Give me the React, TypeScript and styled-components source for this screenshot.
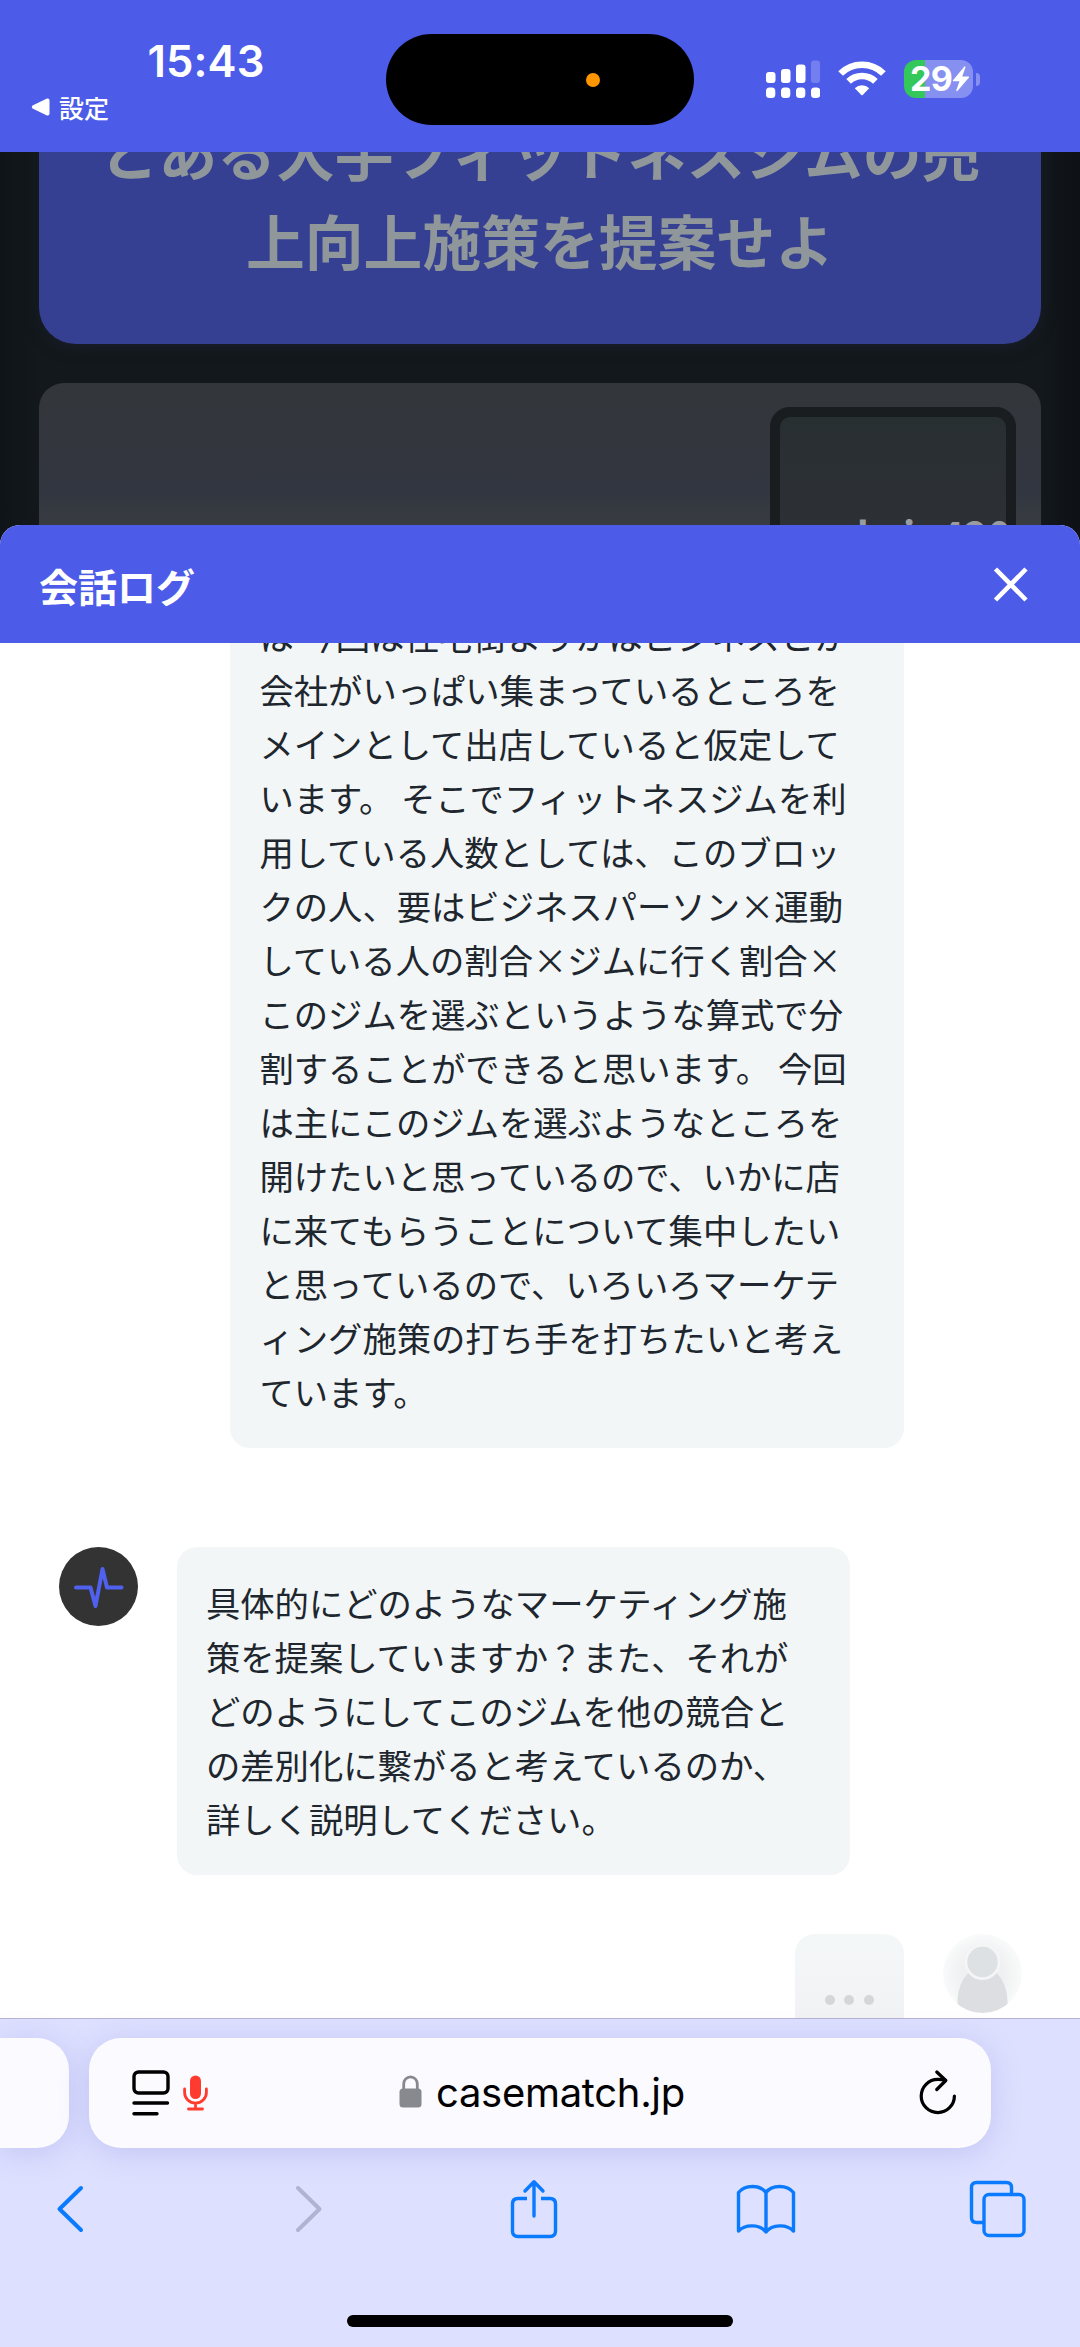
import React from "react";
import styled, { createGlobalStyle } from "styled-components";

const JP = `"Noto Sans CJK JP", sans-serif`;
const UI = `Inter, "Noto Sans CJK JP", sans-serif`;
const brand = "#4c5ce9";
const iosBlue = "#0a7aff";

const Global = createGlobalStyle`
  * { box-sizing: border-box; }
  body { margin: 0; background: #fff; }
  svg { display: block; flex: none; }
`;

const Screen = styled.main`
  width: 1080px;
  height: 2347px;
  display: flex;
  flex-direction: column;
  overflow: hidden;
  font-family: ${JP};
`;

/* ---------- status bar ---------- */

const StatusBar = styled.header`
  height: 152px;
  flex: none;
  display: grid;
  grid-template-columns: 386px 308px 1fr;
  background: ${brand};
  color: #fff;
`;

const StatusLeft = styled.div`
  display: flex;
  flex-direction: column;
  padding: 35px 0 0 30.5px;
`;

const Clock = styled.div`
  margin-left: 117px;
  font: 600 43.6px/54px ${UI};
  letter-spacing: 0.1px;
  white-space: nowrap;
`;

const BackLink = styled.div`
  display: flex;
  align-items: center;
  gap: 9.5px;
  height: 36px;
  font: 500 25px/36px ${JP};
`;

const Island = styled.div`
  height: 91px;
  margin-top: 34px;
  border-radius: 46px;
  background: #000;
  display: flex;
  align-items: center;
  padding-left: 200px;
`;

const MicDot = styled.span`
  width: 14px;
  height: 14px;
  border-radius: 50%;
  background: #ff9500;
`;

const StatusIcons = styled.div`
  display: flex;
  align-items: center;
  height: 38px;
  margin: 60px 0 0 72px;
`;

const Battery = styled.div`
  width: 69px;
  height: 38px;
  margin-left: 18px;
  border-radius: 12px;
  display: flex;
  align-items: center;
  padding-left: 6px;
  background: linear-gradient(90deg, #34c759 0 21px, #8690f1 21px);
  font: 700 34px/38px ${UI};
  letter-spacing: -0.6px;
`;

const BatteryCap = styled.span`
  width: 4px;
  height: 13px;
  margin-left: 3px;
  border-radius: 0 4px 4px 0;
  background: #8690f1;
`;

/* ---------- dimmed page ---------- */

const Page = styled.section`
  height: 398px;
  flex: none;
  overflow: hidden;
  padding: 0 39px;
  background: linear-gradient(90deg, #0f1418 0, #12181b 40px, #12181b 1040px, #0e1116 100%);
`;

const TopicCard = styled.h1`
  margin: -104px 0 0;
  padding: 59px 0 59.5px;
  border-radius: 37px;
  background: #364093;
  box-shadow: 0 4px 14px #181d29;
  color: #8f979b;
  text-align: center;
  font: 700 58.8px/88.5px ${JP};
  white-space: nowrap;
`;

const VideoCard = styled.div`
  height: 300px;
  margin-top: 39px;
  padding: 24px 25px;
  border-radius: 25px;
  display: flex;
  justify-content: flex-end;
  background: linear-gradient(#33363a 0, #323640 110px, #393d41 145px);
`;

const Thumb = styled.div`
  width: 246px;
  height: 220px;
  border: 10px solid #191d20;
  border-radius: 20px;
  background: linear-gradient(#282f31, #2d3035 110px);
  display: flex;
  justify-content: center;
  padding-top: 87px;
  color: #9a9ca0;
  font: 700 40px/60px ${JP};
`;

/* ---------- conversation sheet ---------- */

const Sheet = styled.section`
  position: relative;
  flex: none;
  height: 1493px;
  margin-top: -25px;
  overflow: hidden;
  border-radius: 20px 20px 0 0;
  background: #fff;
`;

const SheetHeader = styled.div`
  height: 118px;
  display: flex;
  align-items: center;
  justify-content: space-between;
  padding: 0 51px 0 39px;
  background: ${brand};
  color: #fff;
`;

const SheetTitle = styled.h2`
  margin: 1px 0 0;
  font: 700 39px/58px ${JP};
`;

const Log = styled.div`
  height: 1375px;
  overflow: hidden;
  display: flex;
  flex-direction: column;
`;

const Row = styled.div<{ $mine?: boolean; $gap: number }>`
  display: flex;
  align-items: flex-start;
  flex: none;
  gap: 39px;
  margin-top: ${(p) => p.$gap}px;
  padding: 0 58.5px;
  justify-content: ${(p) => (p.$mine ? "flex-end" : "flex-start")};
`;

const Bubble = styled.div`
  width: 673.5px;
  padding: 29.4px;
  border-radius: 20px;
  background: #f3f6f7;
  color: #20262e;
  font: 400 34.35px/53.97px ${JP};
  white-space: nowrap;
`;

const Line = styled.div``;

const AvatarSlot = styled.div`
  width: 79px;
  flex: none;
`;

const BotAvatar = styled.div`
  width: 79px;
  height: 79px;
  border-radius: 50%;
  background: #333;
`;

const Typing = styled.div`
  width: 109px;
  height: 132px;
  border-radius: 20px;
  background: linear-gradient(#f4f7f8, #f1f2f3 84px);
  display: flex;
  align-items: center;
  justify-content: center;
  gap: 9.5px;
`;

const Dot = styled.i`
  width: 10px;
  height: 10px;
  border-radius: 50%;
  background: #d5d6d6;
`;

/* ---------- browser chrome ---------- */

const Browser = styled.footer`
  position: relative;
  height: 329px;
  flex: none;
  border-top: 1px solid #b7b3d8;
  background: #dde0fe;
  display: flex;
  flex-direction: column;
  align-items: center;
`;

const Tabs = styled.div`
  width: 1080px;
  height: 110px;
  margin-top: 19px;
  display: flex;
  gap: 20px;
`;

const TabEdge = styled.div`
  width: 68.5px;
  border-radius: 0 32px 32px 0;
  background: #fafaff;
  box-shadow: 0 5px 30px rgba(120, 115, 220, 0.25);
`;

const AddressBar = styled.div`
  width: 902.5px;
  border-radius: 32px;
  background: #fafaff;
  box-shadow: 0 5px 30px rgba(120, 115, 220, 0.25);
  display: grid;
  grid-template-columns: 310px 1fr 72px;
  align-items: center;
`;

const PageTools = styled.div`
  display: flex;
  align-items: center;
  gap: 13px;
  padding-left: 43px;
`;

const Host = styled.div`
  display: flex;
  align-items: center;
  gap: 14.5px;
  color: #000;
  font: 400 40px/50px ${UI};
  letter-spacing: -0.3px;
`;

const Nav = styled.nav`
  width: 1080px;
  height: 60px;
  margin-top: 31px;
  padding: 0 54px 0 42px;
  display: flex;
  justify-content: space-between;
  align-items: center;
`;

const NavItem = styled.div<{ $inset?: number }>`
  width: 58px;
  padding-left: ${(p) => p.$inset ?? 0}px;
  display: flex;
  justify-content: center;
`;

const HomeIndicator = styled.div`
  width: 386px;
  height: 12.5px;
  margin-top: 75.5px;
  border-radius: 7px;
  background: #000;
`;

/* ---------- icons ---------- */

const Signal = () => (
  <svg width="54" height="38" fill="#fff">
    <rect x="0" y="12" width="9.5" height="11" rx="3" />
    <rect x="15" y="9" width="9.5" height="14" rx="3" />
    <rect x="30" y="4.5" width="9.5" height="18.5" rx="3" />
    <rect x="45" y="0.5" width="9" height="22.5" rx="3" opacity="0.22" />
    {[0, 15, 30, 45].map((x) => (
      <rect key={x} x={x} y="27.5" width="9.3" height="10.5" rx="3.5" />
    ))}
  </svg>
);

const WifiSlot = styled.span`
  margin-left: 18px;
`;

const Wifi = () => (
  <WifiSlot>
    <svg width="48" height="38" viewBox="0 0 48 38" fill="none" stroke="#fff" strokeWidth="6.6">
      <path d="M2.6 13.5 A30.5 30.5 0 0 1 45.4 13.5" />
      <path d="M10.6 21.4 A19.2 19.2 0 0 1 37.4 21.4" />
      <path d="M16.8 28.2 A10.3 10.3 0 0 1 31.2 28.2 L24.7 35 Q24 35.7 23.3 35 Z" fill="#fff" stroke="none" />
    </svg>
  </WifiSlot>
);

const Bolt = () => (
  <svg width="18" height="26" viewBox="0 0 18 26" fill="#fff">
    <path d="M12.4 0.5 L1 14.2 Q0.3 15.3 1.6 15.3 H7.5 L4.2 24.6 Q4.4 25.8 5.4 25 L17 11.6 Q17.5 10.4 16.3 10.4 H10.2 L13.4 1.4 Q13.5 0 12.4 0.5 Z" />
  </svg>
);

const Pulse = () => (
  <svg width="79" height="79" fill="none" stroke="#4f61ee" strokeWidth="4" strokeLinecap="round" strokeLinejoin="round">
    <path d="M17 40.5 H31.5 L36.5 59 L43.5 22 L48 40.5 H62.5" />
  </svg>
);

const Person = () => (
  <svg width="79" height="79" viewBox="0 0 79 79">
    <defs>
      <radialGradient id="disc">
        <stop offset="0.5" stopColor="#eef0f1" />
        <stop offset="1" stopColor="#f9fafa" />
      </radialGradient>
      <clipPath id="round">
        <circle cx="39.5" cy="39.5" r="39.5" />
      </clipPath>
    </defs>
    <g clipPath="url(#round)">
      <rect width="79" height="79" fill="url(#disc)" />
      <path d="M14.5 66 Q15 50 25.5 38.5 H53.5 Q64 50 64.5 66 V79 H14.5 Z" fill="#dcdee2" />
      <circle cx="39.5" cy="28" r="18" fill="#f3f5f6" />
      <circle cx="39.5" cy="28" r="15.2" fill="#dde1e3" />
    </g>
  </svg>
);

const Close = () => (
  <svg width="36" height="36" stroke="#fff" strokeWidth="4.6">
    <path d="M2.5 3 L33 34 M33 3 L2.5 34" />
  </svg>
);

const Reader = () => (
  <svg width="38" height="46" fill="none" stroke="#000" strokeWidth="3.4" strokeLinecap="round">
    <rect x="2" y="2" width="34" height="21" rx="4.5" />
    <path d="M2 33 H35.5 M2 43.7 H25" />
  </svg>
);

const Microphone = () => (
  <svg width="25" height="36" fill="none" stroke="#ff3b30" strokeWidth="2.8" strokeLinecap="round">
    <rect x="7" y="0.5" width="11" height="23.5" rx="5.5" fill="#ff3b30" stroke="none" />
    <path d="M1.6 14 V17.5 A10.9 10.6 0 0 0 23.4 17.5 V14 M12.5 28.5 V34 M5.5 34 H19.5" />
  </svg>
);

const Lock = () => (
  <svg width="23" height="36" viewBox="0 0 23 36">
    <path d="M4.7 15 V9 A6.8 7.2 0 0 1 18.3 9 V15" fill="none" stroke="#88898f" strokeWidth="2.8" />
    <rect x="0.5" y="13.5" width="22" height="19" rx="3.5" fill="#88898f" />
  </svg>
);

const Reload = () => (
  <svg width="38" height="46" fill="none" stroke="#000" strokeWidth="3.2" strokeLinecap="round" strokeLinejoin="round">
    <path d="M35.4 26 A16.6 16.6 0 1 1 18.8 9.4 Q23 9.4 26.5 10.5" />
    <path d="M17.8 2 L26.8 10.5 L17.8 19.5" />
  </svg>
);

const Chevron = ({ flip }: { flip?: boolean }) => (
  <svg width="34" height="50" fill="none" stroke={flip ? "#b0b3d2" : iosBlue} strokeWidth="4" strokeLinecap="round" strokeLinejoin="round">
    <path d={flip ? "M5 4 L26.5 25 L5 46" : "M27 4 L5.5 25 L27 46"} />
  </svg>
);

const Share = () => (
  <svg width="48" height="60" fill="none" stroke={iosBlue} strokeWidth="3.4" strokeLinecap="round" strokeLinejoin="round">
    <path strokeLinecap="butt" d="M17 19.5 H8 Q2.5 19.5 2.5 25 V52 Q2.5 57.5 8 57.5 H40 Q45.5 57.5 45.5 52 V25 Q45.5 19.5 40 19.5 H31" />
    <path d="M24 37 V3 M15 12 L24 2.7 L33 12" />
  </svg>
);

const Book = () => (
  <svg width="60" height="52" fill="none" stroke={iosBlue} strokeWidth="3.4" strokeLinecap="round" strokeLinejoin="round">
    <path d="M30 9.5 C24 1.5 9 1.5 2.5 9.5 V48 C9 41 24 41 30 49 C36 41 51 41 57.5 48 V9.5 C51 1.5 36 1.5 30 9.5 Z M30 9.5 V48" />
  </svg>
);

const TabsIcon = () => (
  <svg width="57" height="58" fill="none" stroke={iosBlue} strokeWidth="3.4">
    <path d="M42.5 14 V7.5 Q42.5 2.5 37.5 2.5 H7.5 Q2.5 2.5 2.5 7.5 V37.5 Q2.5 42.5 7.5 42.5 H14" />
    <rect x="15" y="14.5" width="40" height="41" rx="5" />
  </svg>
);

/* ---------- data ---------- */

const answer = [
  "は 今回は住宅街よりかはビジネスとか",
  "会社がいっぱい集まっているところを",
  "メインとして出店していると仮定して",
  "います。 そこでフィットネスジムを利",
  "用している人数としては、このブロッ",
  "クの人、要はビジネスパーソン×運動",
  "している人の割合×ジムに行く割合×",
  "このジムを選ぶというような算式で分",
  "割することができると思います。 今回",
  "は主にこのジムを選ぶようなところを",
  "開けたいと思っているので、いかに店",
  "に来てもらうことについて集中したい",
  "と思っているので、いろいろマーケテ",
  "ィング施策の打ち手を打ちたいと考え",
  "ています。",
];

const question = [
  "具体的にどのようなマーケティング施",
  "策を提案していますか？また、それが",
  "どのようにしてこのジムを他の競合と",
  "の差別化に繋がると考えているのか、",
  "詳しく説明してください。",
];

const Message = ({ lines }: { lines: string[] }) => (
  <Bubble>
    {lines.map((text) => (
      <Line key={text}>{text}</Line>
    ))}
  </Bubble>
);

export default function App() {
  return (
    <Screen>
      <Global />
      <StatusBar>
        <StatusLeft>
          <Clock>15:43</Clock>
          <BackLink>
            <svg width="19" height="18" fill="#fff">
              <path d="M1.5 7.6 L16 0.6 Q18.5 0 18.5 2.5 V15.5 Q18.5 18 16 17.4 L1.5 10.4 Q0 9 1.5 7.6 Z" />
            </svg>
            設定
          </BackLink>
        </StatusLeft>
        <Island>
          <MicDot />
        </Island>
        <StatusIcons>
          <Signal />
          <Wifi />
          <Battery>
            29
            <Bolt />
          </Battery>
          <BatteryCap />
        </StatusIcons>
      </StatusBar>

      <Page>
        <TopicCard>
          とある大手フィットネスジムの売
          <br />
          上向上施策を提案せよ
        </TopicCard>
        <VideoCard>
          <Thumb>maskeio420</Thumb>
        </VideoCard>
      </Page>

      <Sheet>
        <SheetHeader>
          <SheetTitle>会話ログ</SheetTitle>
          <Close />
        </SheetHeader>
        <Log>
          <Row $mine $gap={-63.3}>
            <Message lines={answer} />
            <AvatarSlot />
          </Row>
          <Row $gap={98.5}>
            <BotAvatar>
              <Pulse />
            </BotAvatar>
            <Message lines={question} />
          </Row>
          <Row $mine $gap={59}>
            <Typing>
              <Dot />
              <Dot />
              <Dot />
            </Typing>
            <Person />
          </Row>
        </Log>
      </Sheet>

      <Browser>
        <Tabs>
          <TabEdge />
          <AddressBar>
            <PageTools>
              <Reader />
              <Microphone />
            </PageTools>
            <Host>
              <Lock />
              casematch.jp
            </Host>
            <Reload />
          </AddressBar>
        </Tabs>
        <Nav>
          <NavItem>
            <Chevron />
          </NavItem>
          <NavItem $inset={14}>
            <Chevron flip />
          </NavItem>
          <NavItem>
            <Share />
          </NavItem>
          <NavItem>
            <Book />
          </NavItem>
          <NavItem>
            <TabsIcon />
          </NavItem>
        </Nav>
        <HomeIndicator />
      </Browser>
    </Screen>
  );
}
